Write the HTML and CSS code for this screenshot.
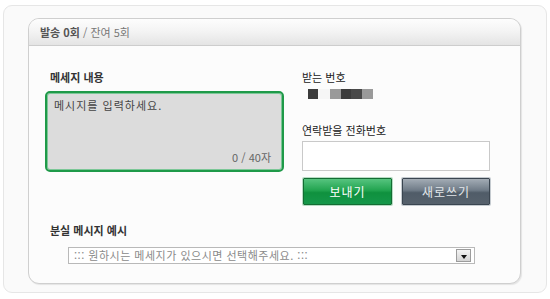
FILE: index.html
```html
<!DOCTYPE html>
<html lang="ko">
<head>
  <meta charset="UTF-8" />
  <title>메시지 보내기</title>
  <link rel="stylesheet" href="styles.css">
</head>
<body>
  <div class="outer-box">
    <div class="panel">
      <div class="panel-head">
        <b>발송 0회</b> / 잔여 5회
      </div>
      <div class="panel-body">
        <div class="send-row">
          <div class="msg-col">
            <div class="label">메세지 내용</div>
            <div class="msg-area">
              <div class="msg-text">메시지를 입력하세요.</div>
              <div class="msg-count">0 / 40자</div>
            </div>
          </div>
          <div class="side-col">
            <div class="label light">받는 번호</div>
            <div class="number-blur">
              <span class="px dark"></span>
              <span class="px gap"></span>
              <span class="px mid"></span>
              <span class="px dark"></span>
              <span class="px darker"></span>
              <span class="px mid"></span>
            </div>
            <div class="label light contact-label">연락받을 전화번호</div>
            <input type="text" class="phone-input" />
            <div class="btn-row">
              <button class="btn btn-send">보내기</button>
              <button class="btn btn-reset">새로쓰기</button>
            </div>
          </div>
        </div>
        <div class="example">
          <div class="label">분실 메시지 예시</div>
          <div class="fake-select">
            <span class="select-text">::: 원하시는 메세지가 있으시면 선택해주세요. :::</span>
            <span class="select-arrow"><i></i></span>
          </div>
        </div>
      </div>
    </div>
  </div>
</body>
</html>
```

FILE: styles.css
```css
body {
  margin: 0;
  background: #fff;
  font-family: "Noto Sans CJK KR", "Noto Sans", sans-serif;
  font-size: 11px;
  color: #333;
}
.outer-box {
  margin: 5px 3px 0 3px;
  height: 288px;
  box-sizing: border-box;
  border: 1px solid #e6e6e6;
  border-radius: 9px;
  background: #fafafa;
  padding: 12px 25px 0 24px;
}
.panel {
  height: 266px;
  box-sizing: border-box;
  border: 1px solid #cfcfcf;
  border-radius: 11px;
  background: #fcfcfc;
  box-shadow: 1px 1px 1px #e4e4e4;
  overflow: hidden;
}
.panel-head {
  height: 26px;
  line-height: 26px;
  border-bottom: 1px solid #cdcdcd;
  background: linear-gradient(#fdfdfd, #f3f3f3 50%, #e4e4e4);
  padding-left: 11px;
  color: #777;
  font-size: 11px;
}
.panel-head b {
  color: #555;
}
.panel-body {
  padding: 24px 0 0 16px;
}
.send-row {
  display: flex;
  gap: 18px;
}
.label {
  font-weight: bold;
  font-size: 11px;
  line-height: 14px;
  color: #333;
}
.label.light {
  font-weight: normal;
  color: #222;
}
.msg-col .label {
  padding-left: 5px;
  margin-bottom: 7px;
}
.msg-area {
  width: 239px;
  height: 81px;
  box-sizing: border-box;
  border: 2px solid #1f9a49;
  border-radius: 5px;
  background: #dcdcdc;
  box-shadow: inset 0 0 0 1px #7cc797;
  position: relative;
}
.msg-text {
  padding: 5px 0 0 7px;
  color: #444;
  letter-spacing: 1px;
  line-height: 14px;
}
.msg-count {
  position: absolute;
  right: 11px;
  bottom: 6px;
  color: #666;
  line-height: 14px;
}
.side-col {
  width: 189px;
  display: flex;
  flex-direction: column;
}
.number-blur {
  display: flex;
  margin: 3px 0 0 6px;
  height: 10px;
  padding: 2px 0;
}
.px {
  width: 10px;
  height: 10px;
}
.px.dark { background: #3c3c3c; }
.px.darker { background: #494949; width: 11px; }
.px.mid { background: #9a9a9a; width: 11px; }
.px.gap { width: 12px; background: #f6f6f6; }
.contact-label {
  margin-top: 22px;
}
.phone-input {
  margin-top: 4px;
  width: 188px;
  height: 30px;
  box-sizing: border-box;
  border: 1px solid #c9c9c9;
  background: #fff;
}
.btn-row {
  display: flex;
  gap: 10px;
  margin-top: 7px;
  padding-left: 1px;
}
.btn {
  width: 89px;
  height: 27px;
  border-radius: 1px;
  font-family: inherit;
  font-size: 12px;
  letter-spacing: 1px;
  padding: 0;
  cursor: pointer;
}
.btn-send {
  border: 1px solid #146c33;
  background: linear-gradient(#56c47f, #22a450 45%, #0f913e 55%, #15974a);
  color: #fff;
  box-shadow: 0 0 0 1px #b6dcc3;
}
.btn-reset {
  width: 88px;
  border: 1px solid #3a4550;
  background: linear-gradient(#a3acb5, #6f7b87 45%, #505c68 55%, #56616c);
  color: #e2e6ea;
  box-shadow: 0 0 0 1px #c5cbd0;
}
.example {
  margin-top: 18px;
}
.example .label {
  padding-left: 5px;
}
.fake-select {
  margin: 10px 0 0 23px;
  width: 407px;
  height: 17px;
  box-sizing: border-box;
  border: 1px solid #b9b9b9;
  background: #fff;
  display: flex;
  align-items: center;
  justify-content: space-between;
}
.select-text {
  padding-left: 5px;
  color: #8a8a8a;
  font-size: 11px;
  letter-spacing: 0.5px;
  line-height: 15px;
}
.select-arrow {
  width: 13px;
  height: 11px;
  margin-right: 3px;
  border: 1px solid #9c9c9c;
  background: linear-gradient(#f4f4f4, #d4d4d4);
  display: flex;
  align-items: center;
  justify-content: center;
}
.select-arrow i {
  width: 0;
  height: 0;
  border-left: 3px solid transparent;
  border-right: 3px solid transparent;
  border-top: 4px solid #111;
  margin-top: 2px;
}
```
